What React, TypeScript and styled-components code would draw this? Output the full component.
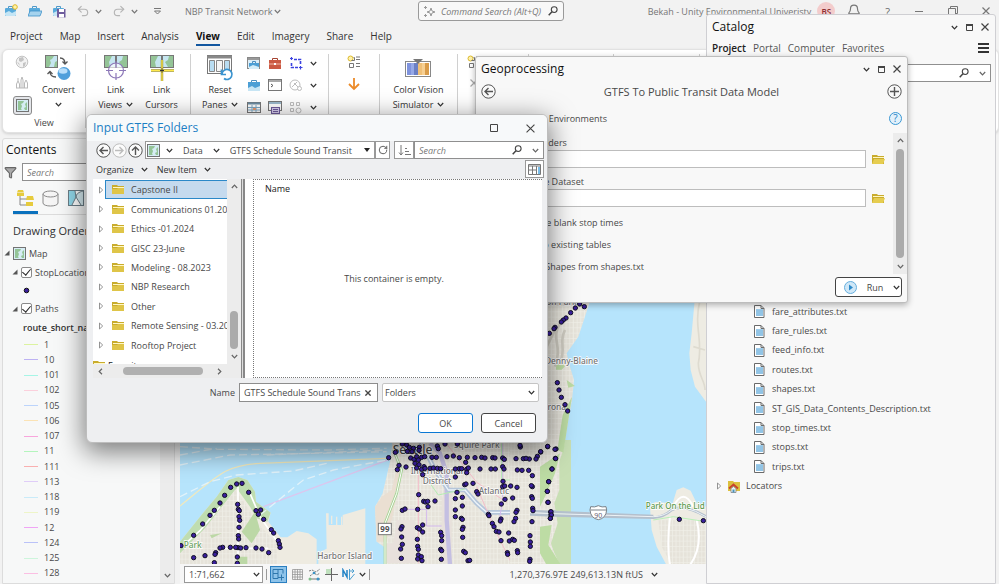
import React from 'react';
import styled, { createGlobalStyle, css } from 'styled-components';
import { Bell, Undo2, Redo2, RotateCw, Filter } from 'lucide-react';

const Global = createGlobalStyle`
  * { box-sizing: border-box; }
  html, body, #root { height: 100%; }
  body { margin: 0; background: #f2f2f2; overflow: hidden; }
  body, button, input, select { font-family: "Open Sans", "Noto Sans", sans-serif; font-size: 9px; color: #484848; }
  button { border: 0; background: none; padding: 0; }
  ul { list-style: none; margin: 0; padding: 0; }
  h2 { margin: 0; font-weight: 400; }
  svg { flex: none; display: block; }
`;

/* ---------- shell ---------- */
const Shell = styled.div`
  position: relative;
  display: flex;
  flex-direction: column;
  height: 100vh;
  overflow: hidden;
`;
const TitleBar = styled.header`
  display: grid;
  grid-template-columns: 418fr 146fr 435fr;
  height: 24px;
  padding: 1px 0 3px;
  color: #767676;
`;
const QuickAccess = styled.div`
  display: flex;
  align-items: center;
  padding-left: 4px;
  gap: 10px;
`;
const SplitButton = styled.div`
  display: flex;
  align-items: center;
  gap: 5px;
`;
const IconButton = styled.button<{ $tone?: string }>`
  display: inline-flex;
  align-items: center;
  justify-content: center;
  color: ${(p) => p.$tone || '#444'};
`;
const ProjectName = styled.button`
  display: flex;
  align-items: center;
  gap: 2px;
  margin-left: 9px;
  color: #767676;
  white-space: nowrap;
`;
const CommandSearch = styled.label`
  display: flex;
  align-items: center;
  gap: 5px;
  padding: 0 5px 0 4px;
  border: 1px solid #9a9a9a;
  border-radius: 3px;
  background: #f8f8f8;
`;
const BareInput = styled.input`
  flex: 1;
  min-width: 0;
  width: 0;
  padding: 0;
  border: 0;
  outline: 0;
  background: none;
  &::placeholder { color: #777; font-style: italic; opacity: 1; }
`;
const Account = styled.div`
  display: flex;
  align-items: center;
  justify-content: flex-end;
  gap: 6px;
  padding-right: 9px;
  white-space: nowrap;
`;
const Avatar = styled.span`
  display: grid;
  place-items: center;
  width: 18px;
  height: 18px;
  border-radius: 50%;
  background: #f3cccc;
  color: #8c2f33;
  font-size: 8px;
  font-weight: 600;
`;
const WindowButtons = styled.div`
  display: flex;
  align-items: center;
  gap: 24px;
  padding-left: 6px;
`;
const HelpButton = styled.button`
  font-size: 11px;
  color: #6a6a6a;
`;
const Tabs = styled.nav`
  display: flex;
  gap: 17px;
  height: 25px;
  padding: 3px 10px 0;
`;
const Tab = styled.button<{ $active?: boolean }>`
  align-self: flex-start;
  height: 19px;
  font-size: 10px;
  color: ${(p) => (p.$active ? '#111' : '#333')};
  font-weight: ${(p) => (p.$active ? 700 : 400)};
  border-bottom: 2px solid ${(p) => (p.$active ? '#1257a0' : 'transparent')};
`;

/* ---------- ribbon ---------- */
const Ribbon = styled.section`
  display: flex;
  height: 84px;
  flex: none;
  margin: 0 0 0 2px;
  background: #fff;
  border: 1px solid #e2e2e2;
  border-radius: 6px;
  box-shadow: 0 1px 3px rgba(0, 0, 0, 0.15);
`;
const Group = styled.div<{ $w: number }>`
  display: flex;
  flex-direction: column;
  justify-content: space-between;
  width: ${(p) => p.$w}px;
  flex: none;
  margin: 4px 0;
  border-right: 1px solid #d0d0d0;
`;
const GroupBody = styled.div<{ $pad?: number }>`
  display: flex;
  justify-content: space-evenly;
  padding: 0 ${(p) => p.$pad ?? 0}px;
`;
const GroupLabel = styled.span`
  text-align: center;
  line-height: 10px;
`;
const BigButton = styled.button`
  display: flex;
  flex-direction: column;
  align-items: center;
  gap: 2px;
  line-height: 13px;
  white-space: nowrap;
  color: #333;
`;
const Line = styled.span`
  display: flex;
  align-items: center;
  gap: 4px;
  height: 13px;
`;
const IconColumn = styled.div<{ $gap?: number }>`
  display: flex;
  flex-direction: column;
  align-items: center;
  gap: ${(p) => p.$gap ?? 6}px;
  padding-top: 1px;
`;
const IconGrid = styled.div`
  display: grid;
  grid-template-columns: repeat(4, auto);
  gap: 9px 7px;
  padding-top: 3px;
  align-items: center;
`;
const ActiveTool = styled.button`
  display: grid;
  place-items: center;
  width: 19px;
  height: 19px;
  border: 1px solid #8a8a8a;
  border-radius: 3px;
  background: #e4e6ea;
`;

/* ---------- workspace ---------- */
const Workspace = styled.main`
  display: flex;
  flex: 1;
  min-height: 0;
  gap: 5px;
  padding: 5px 293px 0 2px;
`;
const Contents = styled.section`
  display: flex;
  flex-direction: column;
  width: 173px;
  flex: none;
  border: 1px solid #dcdcdc;
  border-radius: 3px 3px 0 0;
  background: #f7f8f8;
  overflow: hidden;
`;
const PanelTitle = styled.h2`
  padding: 2px 3px 0;
  font-size: 12px;
  line-height: 18px;
  color: #111;
`;
const FilterRow = styled.div`
  display: flex;
  align-items: center;
  gap: 5px;
  padding: 4px 2px 0 1px;
`;
const SearchField = styled.label`
  display: flex;
  flex: 1;
  min-width: 0;
  align-items: center;
  gap: 10px;
  height: 18px;
  padding: 0 4px;
  border: 1px solid #8f8f8f;
  background: #fff;
`;
const ViewTabs = styled.div`
  display: flex;
  margin: 4px 0 0 10px;
  border-bottom: 1px solid #dcdcdc;
`;
const ViewTab = styled.button<{ $active?: boolean }>`
  display: flex;
  justify-content: center;
  align-items: center;
  width: 25px;
  height: 29px;
  border-bottom: 3px solid ${(p) => (p.$active ? '#0a71bd' : 'transparent')};
`;
const ContentsBody = styled.div`
  display: flex;
  flex: 1;
  min-height: 0;
`;
const Layers = styled.div`
  display: flex;
  flex-direction: column;
  flex: 1;
  min-width: 0;
  overflow: hidden;
  white-space: nowrap;
`;
const OrderHeading = styled.h2`
  padding: 7px 10px 4px;
  font-size: 11px;
  line-height: 18px;
  color: #333;
`;
const LayerRow = styled.div<{ $indent: number; $h: number }>`
  display: flex;
  align-items: center;
  gap: 2px;
  height: ${(p) => p.$h}px;
  padding-left: ${(p) => p.$indent}px;
`;
const LayerText = styled.span`
  padding-left: 1px;
`;
const FieldName = styled.strong`
  padding-left: 20px;
  line-height: 19px;
  font-weight: 600;
  color: #333;
`;
const CheckBox = styled.input`
  appearance: none;
  display: grid;
  place-items: center;
  flex: none;
  width: 11px;
  height: 11px;
  margin: 0;
  border: 1px solid #8a8a8a;
  border-radius: 2px;
  background: #fff;
  &:checked::after {
    content: '';
    width: 4px;
    height: 7px;
    margin-top: -2px;
    border: solid #222;
    border-width: 0 1px 1px 0;
    transform: rotate(40deg);
  }
`;
const Symbols = styled.ul`
  display: grid;
  grid-auto-rows: 1fr;
  flex: 1;
  min-height: 0;
  padding-bottom: 2px;
`;
const SymbolRow = styled.li<{ $color: string }>`
  display: flex;
  align-items: center;
  gap: 6px;
  min-height: 0;
  padding-left: 21px;
  line-height: 12px;
  &::before {
    content: '';
    width: 14px;
    height: 1px;
    background: ${(p) => p.$color};
  }
`;
const Gutter = styled.div<{ $w: number; $bg?: string }>`
  display: flex;
  flex-direction: column;
  justify-content: space-between;
  align-items: center;
  width: ${(p) => p.$w}px;
  flex: none;
  padding: 4px 0;
  background: ${(p) => p.$bg || '#ececec'};
`;
const ThumbTrack = styled.div`
  display: flex;
  flex-direction: column;
  flex: 1;
  width: 8px;
  padding: 4px 0;
`;
const Thumb = styled.span<{ $before: number; $size: number }>`
  display: block;
  width: 100%;
  border-radius: 4px;
  background: #ababab;
  height: ${(p) => p.$size}%;
  margin-top: ${(p) => p.$before}px;
`;
const MapView = styled.section`
  display: flex;
  flex-direction: column;
  flex: 1;
  min-width: 0;
`;
const MapCanvas = styled.div`
  display: flex;
  flex: 1;
  min-height: 0;
  background: #b6e4fc;
  overflow: hidden;
`;
const StatusBar = styled.footer`
  display: flex;
  align-items: center;
  gap: 4px;
  height: 20px;
  padding: 0 48px 0 4px;
  background: #f6f6f6;
`;
const ScaleBox = styled.div`
  display: flex;
  align-items: center;
  width: 79px;
  height: 17px;
  padding: 0 2px 0 4px;
  border: 1px solid #999;
  background: #fff;
`;
const Divider = styled.span`
  width: 1px;
  height: 11px;
  background: #999;
  margin: 0 -1px;
`;
const Pressed = styled(IconButton)`
  width: 17px;
  height: 17px;
  border: 1px solid #2b7fc0;
  background: #8dc3ea;
`;
const Coordinates = styled.output`
  display: flex;
  align-items: center;
  gap: 8px;
  margin-left: auto;
  white-space: nowrap;
`;

/* ---------- floating windows ---------- */
const floating = css`
  position: absolute;
  display: flex;
  flex-direction: column;
  border: 1px solid #bdbdbd;
  background: #f8f8f8;
`;
const WinHead = styled.div<{ $h: number }>`
  display: flex;
  align-items: center;
  gap: 7px;
  height: ${(p) => p.$h}px;
  flex: none;
  padding: 0 6px 0 5px;
`;
const WinTitle = styled.h2<{ $tone?: string }>`
  flex: 1;
  font-size: 12px;
  line-height: 18px;
  color: ${(p) => p.$tone || '#111'};
  white-space: nowrap;
`;
const CatalogWindow = styled.aside`
  ${floating}
  top: 14px;
  right: 3px;
  bottom: 0;
  width: 290px;
  border-radius: 3px 3px 0 0;
  border-color: #cfcfd3;
`;
const CatalogTabs = styled.nav`
  display: flex;
  align-items: center;
  gap: 7px;
  height: 20px;
  padding: 0 6px 2px 5px;
`;
const CatalogTab = styled.button<{ $active?: boolean }>`
  font-size: 10px;
  font-weight: ${(p) => (p.$active ? 600 : 400)};
  color: ${(p) => (p.$active ? '#222' : '#555')};
`;
const Spring = styled.span`
  flex: 1;
`;
const CatalogSearch = styled.div`
  display: flex;
  padding: 5px 4px 0;
`;
const CatalogList = styled.ul`
  display: grid;
  grid-auto-rows: 1fr;
  height: 194px;
  margin-top: 220px;
`;
const CatalogItem = styled.li<{ $root?: boolean }>`
  display: flex;
  align-items: center;
  gap: ${(p) => (p.$root ? 5 : 7)}px;
  min-height: 0;
  padding-left: ${(p) => (p.$root ? 8 : 47)}px;
  line-height: 14px;
`;
const ToolWindow = styled.section`
  ${floating}
  top: 56px;
  right: 91px;
  width: 433px;
  height: 247px;
  border-radius: 3px;
  box-shadow: 0 2px 6px rgba(0, 0, 0, 0.3);
`;
const ToolHead = styled.div`
  display: flex;
  align-items: center;
  height: 20px;
  padding: 0 5px;
`;
const ToolName = styled.span`
  flex: 1;
  text-align: center;
  font-size: 11px;
`;
const ToolTabs = styled.nav`
  display: flex;
  align-items: center;
  gap: 16px;
  height: 32px;
  padding: 2px 5px 0 8px;
`;
const ToolBody = styled.div`
  display: flex;
  flex: 1;
  min-height: 0;
`;
const Form = styled.form`
  display: flex;
  flex-direction: column;
  flex: 1;
  padding: 3px 8px 0 7px;
`;
const FieldLabel = styled.label`
  padding-left: 5px;
  line-height: 14px;
`;
const PathRow = styled.div`
  display: flex;
  align-items: center;
  gap: 6px;
  padding-bottom: 7px;
  &:last-of-type { padding-bottom: 4px; }
`;
const PathInput = styled.input`
  flex: 1;
  min-width: 0;
  height: 18px;
  border: 1px solid #bdbdbd;
  background: #fff;
`;
const Option = styled.label`
  display: flex;
  align-items: center;
  gap: 5px;
  height: 22px;
  flex: none;
  padding-left: 6px;
`;
const ToolFoot = styled.div`
  display: flex;
  justify-content: flex-end;
  padding: 3px 5px 5px;
`;
const RunButton = styled.button`
  display: flex;
  align-items: center;
  justify-content: space-between;
  width: 67px;
  height: 20px;
  padding: 0 1px 0 8px;
  border: 1px solid #444;
  border-radius: 3px;
  background: #fff;
`;
const Dialog = styled.section`
  ${floating}
  top: 114px;
  left: 86px;
  width: 462px;
  height: 329px;
  border-radius: 6px;
  background: #eeeff1;
  overflow: hidden;
  box-shadow: 0 7px 26px 2px rgba(0, 0, 0, 0.5);
`;
const DialogHead = styled(WinHead)`
  gap: 27px;
  padding: 0 12px 0 6px;
  background: #f7f9fa;
`;
const Toolbar = styled.div`
  display: flex;
  align-items: center;
  gap: 1px;
  height: 18px;
  padding: 0 3px 0 9px;
`;
const Crumbs = styled.div`
  display: flex;
  align-items: center;
  gap: 10px;
  width: 230px;
  height: 18px;
  margin-left: 1px;
  padding: 0 3px 0 1px;
  border: 1px solid #999;
  background: #fff;
  white-space: nowrap;
`;
const CrumbIcon = styled.span`
  margin-right: -4px;
`;
const CrumbMenu = styled(IconButton)`
  margin-left: auto;
  padding-right: 1px;
`;
const Boxed = styled(IconButton)<{ $w: number }>`
  width: ${(p) => p.$w}px;
  height: 18px;
  margin-left: -1px;
  border: 1px solid #999;
  background: #fff;
`;
const SearchGroup = styled.div`
  display: flex;
  flex: 1;
  min-width: 0;
  margin-left: 4px;
`;
const Commands = styled.div`
  display: flex;
  align-items: center;
  gap: 9px;
  height: 20px;
  padding: 0 3px 0 9px;
`;
const MenuButton = styled.button`
  display: flex;
  align-items: center;
  gap: 7px;
  color: #333;
`;
const Panes = styled.div`
  display: flex;
  height: 199px;
  margin: 0 5px 0 6px;
  background: #fff;
`;
const TreePane = styled.div`
  display: grid;
  grid-template-columns: minmax(0, 1fr) 14px;
  grid-template-rows: minmax(0, 1fr) 14px;
  width: 148px;
  background: #ececec;
`;
const TreeScroll = styled.div`
  background: #fff;
  overflow: hidden;
  padding-top: 1px;
`;
const Tree = styled.ul`
  display: grid;
  grid-auto-rows: 1fr;
  height: 175px;
`;
const TreeItem = styled.li`
  display: flex;
  align-items: stretch;
  min-height: 0;
`;
const Expander = styled(IconButton)`
  width: 12px;
  padding-left: 3px;
  flex: none;
`;
const FolderButton = styled.button<{ $selected?: boolean }>`
  display: flex;
  align-items: center;
  gap: 6px;
  flex: 1;
  padding-left: 6px;
  white-space: nowrap;
  border: 1px solid ${(p) => (p.$selected ? '#2b88c8' : 'transparent')};
  border-right: 0;
  background: ${(p) => (p.$selected ? '#c5daee' : 'none')};
`;
const Favorites = styled.div`
  display: flex;
  align-items: center;
  gap: 2px;
  height: 20px;
  color: #222;
`;
const HScroll = styled.div`
  display: flex;
  align-items: center;
  justify-content: space-between;
  padding: 0 4px;
`;
const HThumb = styled.span`
  width: 80px;
  height: 8px;
  margin-left: 5px;
  border-radius: 4px;
  background: #b0b0b0;
`;
const Splitter = styled.div`
  width: 4px;
  border: 1px solid #888;
  border-width: 0 2px 0 1px;
  background: #ddd;
`;
const ListPane = styled.div`
  display: flex;
  flex-direction: column;
  flex: 1;
  margin-left: 8px;
  border: 1px dotted #777;
  border-right: 0;
`;
const ColumnHead = styled.div`
  padding: 2px 11px;
  line-height: 14px;
  color: #222;
`;
const Empty = styled.p`
  flex: 1;
  display: grid;
  place-items: center;
  margin: 0 8px 18px 0;
`;
const NameRow = styled.div`
  display: flex;
  align-items: center;
  justify-content: flex-end;
  gap: 4px;
  padding: 5px 8px 0 0;
`;
const NameField = styled.div`
  display: flex;
  align-items: center;
  width: 139px;
  height: 19px;
  padding: 0 6px 0 4px;
  border: 1px solid #8d8d8d;
  background: #fff;
`;
const TypePicker = styled.div`
  display: grid;
  align-items: center;
  width: 157px;
  height: 19px;
  border: 1px solid #c4c4c4;
  border-radius: 2px;
  background: #fff;
  & > * { grid-area: 1 / 1; }
  & > svg { justify-self: end; margin-right: 3px; pointer-events: none; }
`;
const TypeSelect = styled.select`
  appearance: none;
  width: 100%;
  height: 100%;
  padding: 0 2px;
  border: 0;
  background: none;
`;
const Actions = styled.div`
  display: flex;
  justify-content: flex-end;
  gap: 8px;
  padding: 11px 11px 0 0;
`;
const ActionButton = styled.button<{ $primary?: boolean }>`
  width: 55px;
  height: 20px;
  border: 1px solid ${(p) => (p.$primary ? '#0a78d4' : '#444')};
  border-radius: 3px;
  background: #fff;
`;

/* ---------- icons ---------- */
const turns = { down: 0, left: 90, up: 180, right: 270 };
const Chevron = ({ c = '#333', dir = 'down' }: { c?: string; dir?: keyof typeof turns }) => (
  <svg width="7" height="7" viewBox="0 0 7 7">
    <path d="M.8 2l2.700 2.800L6.200 2" fill="none" stroke={c} strokeWidth="1.200" transform={`rotate(${turns[dir]} 3.500 3.500)`} />
  </svg>
);
const Cross = ({ s = 8, w = 1.2, c = '#444' }: { s?: number; w?: number; c?: string }) => (
  <svg width={s} height={s} viewBox="0 0 8 8">
    <path d="M.5.5l7 7M7.500.5l-7 7" stroke={c} strokeWidth={w} />
  </svg>
);
const Magnify = () => (
  <svg width="10" height="10" viewBox="0 0 10 10" fill="none" stroke="#444">
    <circle cx="6.200" cy="3.600" r="2.900" strokeWidth="1.100" />
    <path d="M4 5.800L.7 9.200" strokeWidth="1.500" />
  </svg>
);
const MapGlyph = ({ s = 13 }: { s?: number }) => (
  <svg width={s} height={s} viewBox="0 0 13 13">
    <rect x=".5" y=".5" width="12" height="12" fill="#d6edf4" stroke="#737373" />
    <path d="M2 2h6L7 4 5 5l1 2-1 3 1 1H2zM9 5l2-2v8H9L8 9l2-1z" fill="#94c497" />
  </svg>
);
const Briefcase = ({ kind }: { kind: 'new' | 'open' | 'save' }) => (
  <svg width="14" height="14" viewBox="0 0 14 14">
    <path d="M4.500 4V2.500h4V4" fill="none" stroke="#4e98c8" />
    <rect x="1" y="4" width="11" height="8" rx="1" fill="#58aadb" />
    <path d="M1 9l4-2 3 2 4-2v4l-1 1H2l-1-1z" fill="#c4e5f5" />
    {kind === 'new' && <circle cx="11" cy="3" r="2.300" fill="#fff2a5" stroke="#dfb629" />}
    {kind === 'open' && <path d="M2 7h12l-2 5H0z" fill="#a5d3ee" stroke="#3f92c8" strokeWidth=".8" />}
    {kind === 'save' && (
      <g>
        <rect x="5" y="5" width="8.500" height="8.500" fill="#6e5c9d" />
        <path d="M7 5h5v3H7zM7 10h5v3.500H7z" fill="#fff" />
      </g>
    )}
  </svg>
);
const Globe = () => (
  <svg width="14" height="14" viewBox="0 0 14 14">
    <circle cx="7" cy="7" r="5.800" fill="#f2f2f2" stroke="#c3c3c3" />
    <path d="M4 3l4-1 1 3-3 2-2-1zM8 8l3-1-1 4-2 1zM2 7l2 1 1 3z" fill="#c3c3c3" />
  </svg>
);
const Scene = () => (
  <svg width="14" height="15" viewBox="0 0 14 15">
    <path d="M1.500 13V9l1.500-3 1.500 3v4M3 6V3M6 13V5l1-3 1 3v8M9.500 13V8l1.500-3 1.500 3v5M1 13h12" fill="none" stroke="#b9b9b9" />
  </svg>
);
const ConvertIcon = () => (
  <svg width="28" height="27" viewBox="0 0 28 27">
    <rect x="1.500" y="1.500" width="12" height="12" fill="#c6e6f0" stroke="#777" />
    <path d="M2 2h8L8 5 6 6l1 3-2 4H2zM11 8l2-1v6h-3z" fill="#94c497" />
    <path d="M16 4c4 0 5 2 5 6M18.500 7.500L21 10l2.500-2.500M12 23c-4 0-6-2-6-5.500M3.500 20L6 17.500 8.500 20" fill="none" stroke="#555" strokeWidth="1.300" />
    <circle cx="20" cy="19.500" r="6.500" fill="#4f9fdb" />
    <ellipse cx="19" cy="17" rx="4.500" ry="2.800" fill="#b9defa" />
  </svg>
);
const TwinMaps = () => (
  <g>
    <rect x="1.500" y="1.500" width="11" height="12" fill="#c6e6f0" stroke="#777" />
    <path d="M2 2h7L6 8l1 5H2z" fill="#94c497" />
    <rect x="13.500" y="1.500" width="11" height="12" fill="#c6e6f0" stroke="#777" />
    <path d="M20 2h4v11h-5l-3-5 3-2z" fill="#94c497" />
  </g>
);
const LinkViews = () => (
  <svg width="26" height="27" viewBox="0 0 26 27">
    <TwinMaps />
    <circle cx="13" cy="16.500" r="7.500" fill="#fff" fillOpacity=".65" stroke="#8d78b8" strokeWidth="1.200" />
    <path d="M13 7v7M13 19v7M3 16.500h7M16 16.500h7" stroke="#8d78b8" strokeWidth="1.200" />
  </svg>
);
const LinkCursors = () => (
  <svg width="26" height="27" viewBox="0 0 26 27">
    <TwinMaps />
    <path d="M13 6v21M2 16.500h23" stroke="#8a8432" strokeWidth="2.400" />
    <path d="M13 6v21M2 16.500h23" stroke="#ffe94d" strokeWidth="1.300" />
    <path d="M11 16.500h4M13 14.500v4" stroke="#333" />
  </svg>
);
const ResetPanes = () => (
  <svg width="28" height="27" viewBox="0 0 28 27">
    <rect x="1.500" y="1.500" width="24" height="18" fill="#fff" stroke="#777" />
    <path d="M1 3h25" stroke="#888" strokeWidth="3" />
    <path d="M3.500 6.500h5v11h-5zM18.500 6.500h5v10h-5z" fill="#b9ddf2" stroke="#888" />
    <path d="M10.500 6.500h6v11h-6z" fill="#f5f5f5" stroke="#888" />
    <circle cx="20.500" cy="21" r="5.800" fill="#fff" />
    <path d="M16 20a5 5 0 1 1 2 4.500M15.500 15.500v5h4.500" fill="none" stroke="#3a94d0" strokeWidth="1.700" />
  </svg>
);
const PaneIcon = ({ kind }: { kind: 'catalog' | 'case' | 'table' | 'toolbox' | 'python' | 'task' | 'model' | 'fly' | 'grid' }) => (
  <svg width="14" height="13" viewBox="0 0 14 13">
    {kind === 'catalog' && (<g><rect x=".5" y=".5" width="12" height="11" fill="#dceef8" stroke="#888" /><path d="M1 2h11" stroke="#999" strokeWidth="2" /><path d="M5.500 6V4.500h3V6" fill="none" stroke="#4c8fc0" /><rect x="2" y="6" width="10" height="6" fill="#4c9fd5" /><path d="M2 10l4-2 6 2v2H2z" fill="#d4edf8" /></g>)}
    {kind === 'case' && (<g><path d="M4.500 3V1.500h5V3" fill="none" stroke="#4c8fc0" /><rect x="1" y="3" width="12" height="9" fill="#4c9fd5" /><path d="M1 9l4-2 3 2 5-2v5H1z" fill="#c8e6f5" /></g>)}
    {kind === 'table' && (<g><rect x=".5" y="1.500" width="13" height="10" fill="#fff" stroke="#777" /><path d="M1 2.500h12" stroke="#6a8ca3" strokeWidth="2" /><path d="M1 6.500h12M1 9h12M5 4v7M9 4v7" stroke="#7ea9c5" /><path d="M6 7h3v2H6z" fill="#e89a70" /></g>)}
    {kind === 'toolbox' && (<g><path d="M4.500 3V1.500h5V3" fill="none" stroke="#a64331" /><rect x="1" y="3" width="12" height="9" fill="#cb5a43" /><path d="M1 7h12" stroke="#f1b7a6" /><path d="M6 6h2v2H6z" fill="#fff" /></g>)}
    {kind === 'python' && (<g><rect x=".5" y=".5" width="13" height="11" fill="#fff" stroke="#777" /><path d="M1 2h12" stroke="#aaa" strokeWidth="2" /><path d="M3 5l2 1.500L3 8" fill="none" stroke="#555" /></g>)}
    {kind === 'task' && (<g><rect x=".5" y=".5" width="13" height="9" fill="#fff" stroke="#777" /><path d="M1 2h12" stroke="#9bb9cc" strokeWidth="2" /><rect x="3.500" y="6.500" width="8" height="6" fill="#d9cff0" stroke="#6e5c9d" /><path d="M5 8.500h5M5 10.500h5" stroke="#6e5c9d" /></g>)}
    {kind === 'model' && (<g fill="none" stroke="#3b42e0" strokeWidth="1.600"><path d="M5 2.500h6.500V8M9 10.500H2.500V5" strokeDasharray="3 1" /><path d="M1 1.500h3M2.500 0v3M10 10.500h3.500M11.500 9v3.500" strokeWidth="1.200" /></g>)}
    {kind === 'fly' && (<g fill="none" stroke="#bdbdbd"><circle cx="6" cy="6" r="5" /><path d="M3 8l5-5M5 4l4 4" /><circle cx="10.500" cy="9.500" r="2" fill="#fff" /></g>)}
    {kind === 'grid' && (<g fill="none" stroke="#bdbdbd"><path d="M1.500 1.500h3v3h-3zM7.500 1.500h3v3h-3zM1.500 7.500h3v3h-3z" /><circle cx="9.500" cy="9.500" r="2.500" /></g>)}
  </svg>
);
const AddList = () => (
  <svg width="14" height="14" viewBox="0 0 14 14">
    <circle cx="3.500" cy="3.500" r="2.500" fill="#fff3ad" stroke="#dcb92f" />
    <path d="M2.500 8.500h4v4h-4zM6.500 2.500h1v3h-3M9 2h4M9 4.500h4M9 8.500h4M9 11.500h4" fill="none" stroke="#777" />
  </svg>
);
const DownArrow = () => (
  <svg width="14" height="14" viewBox="0 0 14 14">
    <path d="M7 1v11M2 7l5 5 5-5" fill="none" stroke="#ec8b29" strokeWidth="1.800" />
  </svg>
);
const ColorVision = () => (
  <svg width="26" height="27" viewBox="0 -5 26 27">
    <rect x=".5" y="2.500" width="25" height="15" fill="#fff" stroke="#888" />
    <path d="M2 4h4v12H2z" fill="#7f93dd" /><path d="M6 4h3v12H6z" fill="#96a9e8" /><path d="M9 4h4v12H9z" fill="#6c80c4" />
    <path d="M13 4h4v12h-4z" fill="#f0c078" /><path d="M17 4h3v12h-3z" fill="#f7d093" /><path d="M20 4h4v12h-4z" fill="#d99c4a" />
    <path d="M8 0h10l-5 5z" fill="#777" />
  </svg>
);
const Sparkle = () => (
  <svg width="13" height="13" viewBox="0 0 13 13" fill="none" stroke="#999">
    <path d="M8 3l1 3 3 1-3 1-1 3-1-3-3-1 3-1zM2.500 1v3M1 2.500h3M2.500 9v3M1 10.500h3" />
  </svg>
);
const FolderIcon = ({ open }: { open?: boolean }) => (
  <svg width="13" height="11" viewBox="0 0 13 11">
    <path d="M0 1h5l1 1h6v8H0z" fill="#c9ac2d" />
    <path d="M1 3h11v1H1z" fill="#fff7c4" />
    <path d={open ? 'M2 5h11l-2 5H0z' : 'M0 5h5l1-1h6v6H0z'} fill={open ? '#e6cd50' : '#dfc548'} />
  </svg>
);
const FileIcon = () => (
  <svg width="11" height="13" viewBox="0 0 11 13">
    <path d="M.5.5h6.500l3 3v9H.5z" fill="#fff" stroke="#6a6a6a" />
    <path d="M7 .5v3h3" fill="none" stroke="#6a6a6a" />
    <path d="M2 4h7v7H2z" fill="#9fcdec" />
    <path d="M2 6h7M2 8h7M2 10h7" stroke="#7db4da" strokeWidth=".7" />
  </svg>
);
const LocatorIcon = () => (
  <svg width="13" height="13" viewBox="0 0 13 13">
    <path d="M0 1h5l1 1h6v9H0z" fill="#dcc03e" />
    <path d="M1 8.500l4.500-4 4.500 4" fill="none" stroke="#c9432e" strokeWidth="1.800" />
    <path d="M3 8.500l2.500-2 2.500 2v4H3z" fill="#e9f3f8" stroke="#777" strokeWidth=".7" />
    <path d="M4.500 9.500h2v3h-2z" fill="#4b93bd" />
  </svg>
);
const Triangle = ({ open }: { open?: boolean }) => (
  <svg width="8" height="8" viewBox="0 0 8 8">
    {open ? <path d="M6.500 1.500v5H1.500z" fill="#555" /> : <path d="M2.500 1l3.200 3-3.200 3z" fill="#fff" stroke="#888" strokeWidth=".9" />}
  </svg>
);
const RoundArrow = ({ dir, muted }: { dir: number; muted?: boolean }) => (
  <svg width="15" height="15" viewBox="0 0 15 15" fill="none" stroke={muted ? '#bcbcbc' : '#555'}>
    <circle cx="7.500" cy="7.500" r="6.700" fill="#fbfbfb" />
    <path d="M12 7.500H4M7.500 4L4 7.500 7.500 11" strokeWidth="1.400" transform={`rotate(${dir} 7.500 7.500)`} />
  </svg>
);
const PlusCircle = () => (
  <svg width="15" height="15" viewBox="0 0 15 15" fill="none" stroke="#555">
    <circle cx="7.500" cy="7.500" r="6.700" />
    <path d="M7.500 3v9M3 7.500h9" strokeWidth="1.400" />
  </svg>
);
const HelpRing = styled.button`
  display: grid;
  place-items: center;
  width: 13px;
  height: 13px;
  margin-left: auto;
  border: 1px solid #3a97d3;
  border-radius: 50%;
  background: #e2f1fb;
  color: #1e82c4;
  font-size: 10px;
  line-height: 11px;
`;
const Maximize = ({ bar = true }: { bar?: boolean }) => (
  <svg width="9" height="9" viewBox="0 0 9 9">
    <path d={bar ? 'M1.500 1.500h6v6h-6z' : 'M.5.5h7v7h-7z'} fill="none" stroke="#444" />
    {bar && <path d="M1 2h7" stroke="#444" strokeWidth="2" />}
  </svg>
);
const Restore = () => (
  <svg width="10" height="10" viewBox="0 0 10 10" fill="none" stroke="#777">
    <path d="M.5 2.500h7v7h-7zM2.500 2.500v-2h7v7h-2" />
  </svg>
);
const Menu = () => (
  <svg width="11" height="10" viewBox="0 0 11 10">
    <path d="M0 1h11M0 5h11M0 9h11" stroke="#333" strokeWidth="2" />
  </svg>
);
const PlayIcon = () => (
  <svg width="13" height="13" viewBox="0 0 13 13">
    <circle cx="6.500" cy="6.500" r="6" fill="#cfe7f7" stroke="#66aedd" />
    <path d="M5 3.500l4 3-4 3z" fill="#2c8aca" />
  </svg>
);
const SortIcon = () => (
  <svg width="13" height="12" viewBox="0 0 13 12" fill="none" stroke="#777">
    <path d="M3 1v10M1 8.500L3 11l2-2.500M7 4.500h2M7 7.500h4M7 10.500h6" />
  </svg>
);
const DetailsIcon = () => (
  <svg width="13" height="11" viewBox="0 0 13 11">
    <path d="M.5.5h12v10H.5z" fill="#fff" stroke="#777" />
    <path d="M0 2h13M1 6h7M4.500 2v8M8.500 2v8" stroke="#777" />
    <path d="M10 3h2v7h-2z" fill="#79bce8" />
  </svg>
);
const ListByOrder = () => (
  <svg width="17" height="17" viewBox="0 0 17 17">
    <path d="M3 6v9h7M3 9h7" fill="none" stroke="#888" />
    <path d="M1 0h5l1 2.500H0L1 0zM0 3h7v3H0zM10 6h6l1 4H9zM9 12h7v4H9z" fill="#e6cb3d" />
  </svg>
);
const Database = () => (
  <svg width="17" height="17" viewBox="0 0 17 17" fill="#f5f5f5" stroke="#8a8a8a">
    <path d="M1 4v9c0 4 15 4 15 0V4" />
    <ellipse cx="8.500" cy="4" rx="7.500" ry="3" />
  </svg>
);
const SelectionIcon = () => (
  <svg width="16" height="16" viewBox="0 0 16 16">
    <rect x=".5" y=".5" width="15" height="15" fill="#fff" stroke="#6a7d86" />
    <path d="M1 1h6l1 6-4 8H1z" fill="#8fd6e8" /><path d="M15 1c-5 2-7 4-7 6l5 8h2z" fill="#d8eef4" /><path d="M7 1l1 6-4 8M8 7c0-3 3-5 7-6M8 7l5 8" fill="none" stroke="#6a7d86" />
  </svg>
);
const Snap = ({ kind }: { kind: 'add' | 'grid' | 'edit' | 'cross' | 'north' }) => (
  <svg width="13" height="13" viewBox="0 0 13 13" fill="none" stroke="#888">
    {kind === 'add' && <path d="M1 1.500h5v4H1zM6 1.500h5v4M1 5.500v5h5M6 5.500v5M6 9.500h6M9.500 6.500v6" stroke="#2e77ad" />}
    {kind === 'grid' && <path d="M1.500 1.500h10v10h-10zM4 1v11M6.500 1v11M9 1v11M1 4h11M1 6.500h11M1 9h11" stroke="#999" strokeWidth=".8" />}
    {kind === 'edit' && (<g><path d="M1 3l3-1 4 2 4-3M2 8l4-3 3 2 3-2" stroke="#777" strokeDasharray="2 1" /><path d="M1 11h11" stroke="#777" /><circle cx="2" cy="11" r="1.500" fill="#7fc08a" stroke="none" /><circle cx="10" cy="11" r="1.500" fill="#3b93c5" stroke="none" /><circle cx="6" cy="5" r="1.300" fill="#3b93c5" stroke="none" /></g>)}
    {kind === 'cross' && (<g><rect x="1" y="1" width="5" height="5" fill="#bfe0bd" stroke="none" /><path d="M6.500 0v13M0 6.500h13" stroke="#666" /></g>)}
    {kind === 'north' && (<g><path d="M1 9V2l4 7V2" stroke="#2384c6" strokeWidth="1.500" /><path d="M7.500 1v11l5-6M8 3h4M10 1l2 2-2 2" stroke="#4c9fd0" /></g>)}
  </svg>
);

/* ---------- map ---------- */
/* Drawing units are thirds of a pixel; each stop list is local to its map tile. */
const cityStops =
  '92,442 110,432 126,430 146,457 74,466 60,489 43,511 30,526 8,552 -19,586 -57,617 -19,653 15,647 113,493 115,508 118,512 117,530 119,541 117,562 115,587 116,597 114,623 107,622 122,624 91,622 68,622 60,624 47,638 45,643 43,668 138,623 168,624 186,627 206,638 112,651 112,670 168,512 182,510 175,523 191,538 214,569 221,579 235,602 238,612 240,622 ' +
  '566,353 586,337 620,315 607,312 628,322 640,325 636,335 622,334 658,322 657,331 712,318 715,326 735,312 772,312 961,321 960,316 1043,320 1068,327 1022,336 1012,349 1008,357 632,354 642,358 650,350 655,360 665,352 674,350 696,352 709,352 741,350 760,348 778,353 802,352 825,353 845,352 855,354 878,353 885,354 908,354 913,358 948,356 970,356 988,357 978,355 1066,355 ' +
  '597,376 592,389 618,381 645,370 650,384 657,374 665,388 672,380 675,385 690,385 700,384 712,385 722,386 766,387 778,386 785,386 800,388 805,384 840,387 873,387 886,387 908,380 912,387 952,390 966,391 986,391 1056,387 797,367 668,404 766,411 800,398 909,424 794,434 798,432 819,430 830,455 834,462 908,440 914,438 932,438 951,442 771,457 787,472 766,476 787,498 766,510 766,530 784,535 787,538 789,562 787,568 788,592 ' +
  '656,464 671,484 676,486 683,484 705,483 684,500 607,511 615,507 653,508 606,560 603,567 605,591 607,613 602,627 604,655 668,555 652,563 658,567 668,576 652,598 653,619 655,628 655,645 664,650 653,657 666,662 722,577 725,587 725,602 722,628 725,632 724,658 791,634 796,638 804,662 809,661 865,523 867,527 877,550 882,560 889,574 897,576 903,537 901,543 915,478 904,492 938,474 951,511 948,517 947,535 942,545 926,579 903,602 928,603 938,598 943,601 922,638 923,643 952,632 953,638 ' +
  '997,407 997,440 994,437 995,470 997,475 998,505 999,512 996,545 990,587 991,606 991,619 990,658 989,664 1046,425 1042,454 1044,487 1052,516 1053,524 1051,535';
const lakeStops =
  '119,42 133,50 106,54 92,68 78,84 70,90 64,96 45,112 42,116 28,130 52,278 57,300 64,322 75,344 83,363 23,469 45,478 2,485 47,506 36,537 26,575 22,604 24,637 33,665 34,675 31,685 418,688 490,692';
const Stops = ({ at }: { at: string }) => (
  <g fill="#3a1f9e" stroke="#111024" strokeWidth="3">
    {at.split(' ').map((p, i) => {
      const [x, y] = p.split(',');
      return <circle key={i} cx={x} cy={y} r="6.500" />;
    })}
  </g>
);
const CityMap = () => (
  <svg width="100%" height="100%" viewBox="540 414 1578 1278" preserveAspectRatio="xMinYMax slice" role="img" aria-label="Transit stop map">
    <defs>
      <pattern id="blocks" width="22" height="16" patternUnits="userSpaceOnUse">
        <rect width="22" height="16" fill="#e6e3da" />
        <path d="M0 1h22M1 0v16M12 0v16" stroke="#f2f0e9" strokeWidth="2" />
      </pattern>
    </defs>
    <g transform="translate(600 1020)">
      <path d="M-60 605L0 530 50 470 85 420 115 411 142 420 165 455 168 485 212 518 205 545 242 592 262 592 290 573 325 580 350 598V675H-60z" fill="#eeebe1" />
      <path d="M-60 605L0 530 50 470 85 420 115 411 142 420 165 455 168 485 212 518 202 545 170 535 150 500 110 445 70 495 20 560-60 650z" fill="#bfddb0" />
      <path d="M15 565L105 450 135 490 170 545 228 610 235 675H-60V640z" fill="url(#blocks)" />
      <path d="M-60 625L0 572 60 500M55 625h150M114 440v230M150 460l30 70 55 80" stroke="#fff" strokeWidth="5" fill="none" />
      <path d="M125 575l40-60 15 55-25 40zM30 585l35-5-30 15zM112 650h30v24h-30z" fill="#bcd8a6" />
      <path d="M378 520h8v35h42v-30l68-20v170H355v-37l25-12z" fill="#eeebe1" />
      <path d="M395 552v-25M410 555v-25M425 555v-25" stroke="#eeebe1" strokeWidth="4" />
      <path d="M578 300L570 365 548 460 525 500 530 605 552 620V675H1110V300z" fill="url(#blocks)" />
      <path d="M590 385L575 450 548 468 525 500 530 605 560 605 580 520 600 400z" fill="#eadfd2" />
      <path d="M590 540h55v130h-90v-60h25zM735 440h20v230h-30V480z" fill="#e8e1dc" />
      <path d="M580 330l25 60-15 70-35 90v125" fill="none" stroke="#a5d493" strokeWidth="8" />
      <path d="M580 330l25 60-15 70-35 90v125" fill="none" stroke="#fff" strokeWidth="3" />
      <path d="M690 310l30 30 20 60v140l10 135" fill="none" stroke="#c4bfe2" strokeWidth="13" />
      <path d="M660 300l45 90 40 60 50 0 35 40 30 27h240" fill="none" stroke="#b5c6da" strokeWidth="14" />
      <path d="M660 300l45 90 40 60 50 0 35 40 30 27h240" fill="none" stroke="#edf4fa" strokeWidth="4" />
      <path d="M655 400v270M740 312l90 115 90 60M830 440l60 140 45 90" fill="none" stroke="#f4bdcb" strokeWidth="3" />
      <path d="M908 310v170l-10 60M997 400v270M600 508h80v50h45" fill="none" stroke="#d3b8ee" strokeWidth="3" />
      <path d="M690 430l25 35 80-18M905 310v110h50v170" fill="none" stroke="#b5edb3" strokeWidth="3" />
      <path d="M-60 498C60 400 80 375 180 370L560 355" fill="none" stroke="#f1e9bd" strokeWidth="4" />
      <path d="M190 500L568 358" fill="none" stroke="#dcc6ee" strokeWidth="4" />
      <path d="M-60 320l120 8 320 2 180-5M-60 375l150-30 240-5 230-5M-60 470l90-45 80-20 170-12 110-25M180 525l130-105 90-30 160-30M-60 345l110-20M200 345l360-15" fill="none" stroke="#e9f4f9" strokeWidth="4" strokeDasharray="24 12" opacity=".85" />
      <path d="M1078 300v150l-15 40 10 60-20 60 20 65h40V300z" fill="#c8dfb4" />
      <g fontFamily="Noto Sans" fontSize="25" fontWeight="500" fill="#747474" stroke="#fff" strokeWidth="4" paintOrder="stroke">
        <text x="352" y="657">Harbor Island</text>
        <text x="762" y="324">Squire Park</text>
        <text x="632" y="403">International</text>
        <text x="668" y="431">District</text>
        <text x="836" y="461">Atlantic</text>
        <text x="975" y="376">Leschi</text>
        <text x="-49" y="624" fill="#6aa05c">Park</text>
        <text x="578" y="342" fontSize="36" fill="#444">Seattle</text>
      </g>
      <rect x="535" y="550" width="39" height="34" fill="#fff" stroke="#777" strokeWidth="3" />
      <text x="541" y="576" fontFamily="Noto Sans" fontSize="24" fontWeight="700" fill="#555">99</text>
    </g>
    <g transform="translate(1620 870)">
      <path d="M-90-60H160L148 40 130 95 115 140 80 190 90 230 102 270 96 330 85 390 70 480 52 530 40 620 36 700 30 760 62 830H-90z" fill="url(#blocks)" />
      <path d="M96 320L85 390 70 488 52 480 68 375zM0 530l60-40-15 60-25 60L0 650zM0 710l35-5-10 60 38 60H20L0 790zM48 225l15-8 12 12-10 10H48zM80 270l25 18-20 5z" fill="#bddca4" />
      <path d="M60 100C30 150 70 160 45 230M75 120C55 160 80 165 60 225M20 170l30-60" fill="none" stroke="#cfccc2" strokeWidth="8" />
      <path d="M465 20L455 130 448 190 452 240 465 290 498 335V20z" fill="#eeece3" />
      <path d="M480 30c-20 80 10 120-5 190 0 40 20 50 20 80M460 170l35 10" stroke="#dedbd0" strokeWidth="5" fill="none" />
      <path d="M330 652L345 636 398 640 410 600 430 592 452 602 470 640 498 650V830H382L350 770 335 720z" fill="#eeece3" />
      <path d="M355 690h143v135H395L365 770z" fill="url(#blocks)" />
      <path d="M390 680q-10 90 0 145M470 690q20 80-20 135M400 650q30-60 60 0" fill="none" stroke="#fff" strokeWidth="6" />
      <path d="M-30 673L40 676 340 683Q370 682 395 660 430 640 498 680M-30 663L40 666 340 678" fill="none" stroke="#b4c0cd" strokeWidth="8" />
      <path d="M-30 668L40 671 340 680Q370 680 395 660 430 640 498 680" fill="none" stroke="#edf2f6" strokeWidth="3" />
      <path d="M340 690L400 680 498 695" fill="none" stroke="#b9efb7" strokeWidth="3" />
      <g fontFamily="Noto Sans" fontSize="25" fontWeight="500" fill="#747474" stroke="#fff" strokeWidth="4" paintOrder="stroke">
        <text x="174" y="221" textAnchor="end">Denny-Blaine</text>
        <text x="78" y="361" textAnchor="end">Madrona</text>
        <text x="110" y="46" textAnchor="end">Madison Park</text>
        <text x="494" y="656" textAnchor="end" fontSize="24" fill="#5c994e">Park On the Lid</text>
      </g>
      <path d="M152 650q12 3 23-3 11 6 23 3l2 10q-2 25-25 29-23-4-25-29z" fill="#fff" stroke="#7b8288" strokeWidth="3" />
      <path d="M152 660h46" stroke="#7b8288" strokeWidth="3" />
      <text x="163" y="683" fontFamily="Noto Sans" fontSize="21" fill="#667">90</text>
    </g>
    <g transform="translate(600 1020)"><Stops at={cityStops} /></g>
    <g transform="translate(1620 870)"><Stops at={lakeStops} /></g>
  </svg>
);

/* ---------- data ---------- */
const tabs = ['Project', 'Map', 'Insert', 'Analysis', 'View', 'Edit', 'Imagery', 'Share', 'Help'];
const routes: [string, string][] = [
  ['1', '#dcf3a0'], ['10', '#bdb2f3'], ['101', '#a6f5e6'], ['102', '#fbd0dc'], ['105', '#bcd4fb'], ['106', '#fbe3b5'],
  ['107', '#f8a6dc'], ['11', '#b4f5bd'], ['111', '#f9b0b0'], ['113', '#dfcdf8'], ['118', '#c9ebf9'], ['119', '#eef5c8'],
  ['12', '#f0a5f5'], ['124', '#bac2f8'], ['125', '#cdf5dc'], ['128', '#fbbfe3'],
];
const folders = ['Capstone II', 'Communications 01.2024', 'Ethics -01.2024', 'GISC 23-June', 'Modeling - 08.2023', 'NBP Research', 'Other', 'Remote Sensing - 03.2024', 'Rooftop Project'];
const files = ['fare_attributes.txt', 'fare_rules.txt', 'feed_info.txt', 'routes.txt', 'shapes.txt', 'ST_GIS_Data_Contents_Description.txt', 'stop_times.txt', 'stops.txt', 'trips.txt'];

const TopBar = () => (
  <TitleBar>
    <QuickAccess>
      <IconButton aria-label="New project"><Briefcase kind="new" /></IconButton>
      <IconButton aria-label="Open project"><Briefcase kind="open" /></IconButton>
      <IconButton aria-label="Save project"><Briefcase kind="save" /></IconButton>
      <SplitButton>
        <IconButton aria-label="Undo" $tone="#b5b5b5"><Undo2 size={14} /></IconButton>
        <Chevron c="#777" />
      </SplitButton>
      <SplitButton>
        <IconButton aria-label="Redo" $tone="#b5b5b5"><Redo2 size={14} /></IconButton>
        <Chevron c="#777" />
      </SplitButton>
      <IconButton aria-label="Customize toolbar">
        <svg width="18" height="8" viewBox="0 0 18 8"><path d="M6 1.500h7M6.500 4l3 3 3-3z" fill="none" stroke="#777" /></svg>
      </IconButton>
      <ProjectName>NBP Transit Network <Chevron c="#777" /></ProjectName>
    </QuickAccess>
    <CommandSearch>
      <Sparkle />
      <BareInput placeholder="Command Search (Alt+Q)" aria-label="Command Search" />
      <Magnify />
    </CommandSearch>
    <Account>
      Bekah - Unity Environmental Univeristy
      <Avatar>BS</Avatar>
      <WindowButtons>
        <IconButton aria-label="Notifications" $tone="#777"><Bell size={14} /></IconButton>
        <HelpButton aria-label="Help">?</HelpButton>
        <IconButton aria-label="Minimize"><svg width="10" height="9"><path d="M1 4.500h8" stroke="#777" /></svg></IconButton>
        <IconButton aria-label="Restore"><Restore /></IconButton>
        <IconButton aria-label="Close"><Cross c="#777" /></IconButton>
      </WindowButtons>
    </Account>
  </TitleBar>
);

const RibbonBar = () => (
  <Ribbon>
    <Group $w={83}>
      <GroupBody>
        <IconColumn>
          <IconButton aria-label="Global scene"><Globe /></IconButton>
          <IconButton aria-label="Local scene"><Scene /></IconButton>
          <ActiveTool aria-label="Map"><MapGlyph /></ActiveTool>
        </IconColumn>
        <BigButton><ConvertIcon /><span>Convert</span><Line><Chevron /></Line></BigButton>
      </GroupBody>
      <GroupLabel>View</GroupLabel>
    </Group>
    <Group $w={105}>
      <GroupBody>
        <BigButton><LinkViews /><span>Link</span><Line>Views <Chevron /></Line></BigButton>
        <BigButton><LinkCursors /><span>Link</span><span>Cursors</span></BigButton>
      </GroupBody>
    </Group>
    <Group $w={138}>
      <GroupBody $pad={2}>
        <BigButton><ResetPanes /><span>Reset</span><Line>Panes <Chevron /></Line></BigButton>
        <IconGrid>
          {(['catalog', 'toolbox', 'model', 'case', 'python', 'fly', 'table', 'task', 'grid'] as const).map((k, i) => (
            <React.Fragment key={k}>
              <IconButton aria-label={k}><PaneIcon kind={k} /></IconButton>
              {i % 3 === 2 && <IconButton aria-label={`${k} options`}><Chevron /></IconButton>}
            </React.Fragment>
          ))}
        </IconGrid>
      </GroupBody>
    </Group>
    <Group $w={51}>
      <GroupBody>
        <IconColumn $gap={8}>
          <IconButton aria-label="Add item"><AddList /></IconButton>
          <IconButton aria-label="Move down"><DownArrow /></IconButton>
        </IconColumn>
      </GroupBody>
    </Group>
    <Group $w={78}>
      <GroupBody>
        <BigButton><ColorVision /><span>Color Vision</span><Line>Simulator <Chevron /></Line></BigButton>
      </GroupBody>
    </Group>
    <Group $w={71}>
      <GroupBody $pad={9}>
        <IconColumn $gap={10}>
          <IconButton aria-label="New item"><AddList /></IconButton>
          <IconButton aria-label="Remove"><Cross c="#aaa" /></IconButton>
        </IconColumn>
        <Spring />
      </GroupBody>
    </Group>
    <Group $w={85} />
    <Group $w={86} />
  </Ribbon>
);

const ContentsPanel = () => (
  <Contents>
    <PanelTitle>Contents</PanelTitle>
    <FilterRow>
      <Filter size={13} color="#666" fill="#aaa" />
      <SearchField><BareInput placeholder="Search" aria-label="Search contents" /></SearchField>
    </FilterRow>
    <ViewTabs>
      <ViewTab $active aria-label="List by drawing order"><ListByOrder /></ViewTab>
      <ViewTab aria-label="List by data source"><Database /></ViewTab>
      <ViewTab aria-label="List by selection"><SelectionIcon /></ViewTab>
    </ViewTabs>
    <ContentsBody>
      <Layers>
        <OrderHeading>Drawing Order</OrderHeading>
        <LayerRow $indent={0} $h={18}><Triangle open /><MapGlyph /><LayerText>Map</LayerText></LayerRow>
        <LayerRow as="label" $indent={8} $h={20}><Triangle open /><CheckBox type="checkbox" defaultChecked /><LayerText>StopLocations</LayerText></LayerRow>
        <LayerRow $indent={20} $h={17}><svg width="7" height="7"><circle cx="3.500" cy="3.500" r="2.300" fill="#3a1f9e" stroke="#111" /></svg></LayerRow>
        <LayerRow as="label" $indent={8} $h={19}><Triangle open /><CheckBox type="checkbox" defaultChecked /><LayerText>Paths</LayerText></LayerRow>
        <FieldName>route_short_name</FieldName>
        <Symbols>{routes.map(([n, c]) => <SymbolRow key={n} $color={c}>{n}</SymbolRow>)}</Symbols>
      </Layers>
      <Gutter $w={14}><Chevron dir="up" c="#666" /><Chevron c="#666" /></Gutter>
    </ContentsBody>
  </Contents>
);

const CatalogPanel = () => (
  <CatalogWindow>
    <WinHead $h={24}>
      <WinTitle>Catalog</WinTitle>
      <IconButton aria-label="Catalog menu"><Chevron /></IconButton>
      <IconButton aria-label="Maximize Catalog"><Maximize /></IconButton>
      <IconButton aria-label="Close Catalog"><Cross /></IconButton>
    </WinHead>
    <CatalogTabs>
      <CatalogTab $active>Project</CatalogTab>
      <CatalogTab>Portal</CatalogTab>
      <CatalogTab>Computer</CatalogTab>
      <CatalogTab>Favorites</CatalogTab>
      <Spring />
      <IconButton aria-label="Menu"><Menu /></IconButton>
    </CatalogTabs>
    <CatalogSearch>
      <SearchField><BareInput aria-label="Search catalog" /><Magnify /><Chevron c="#666" /></SearchField>
    </CatalogSearch>
    <CatalogList>
      {files.map((f) => <CatalogItem key={f}><FileIcon />{f}</CatalogItem>)}
      <CatalogItem $root><Triangle /><LocatorIcon />Locators</CatalogItem>
    </CatalogList>
  </CatalogWindow>
);

const Geoprocessing = () => (
  <ToolWindow>
    <WinHead $h={24}>
      <WinTitle>Geoprocessing</WinTitle>
      <IconButton aria-label="Pane menu"><Chevron /></IconButton>
      <IconButton aria-label="Maximize pane"><Maximize /></IconButton>
      <IconButton aria-label="Close pane"><Cross /></IconButton>
    </WinHead>
    <ToolHead>
      <IconButton aria-label="Back"><RoundArrow dir={0} /></IconButton>
      <ToolName>GTFS To Public Transit Data Model</ToolName>
      <IconButton aria-label="Add"><PlusCircle /></IconButton>
    </ToolHead>
    <ToolTabs>
      <button>Parameters</button>
      <button>Environments</button>
      <HelpRing aria-label="Tool help">?</HelpRing>
    </ToolTabs>
    <ToolBody>
      <Form>
        <FieldLabel htmlFor="gtfs">Input GTFS Folders</FieldLabel>
        <PathRow><PathInput id="gtfs" /><IconButton type="button" aria-label="Browse folders"><FolderIcon open /></IconButton></PathRow>
        <FieldLabel htmlFor="target">Target Feature Dataset</FieldLabel>
        <PathRow><PathInput id="target" /><IconButton type="button" aria-label="Browse datasets"><FolderIcon open /></IconButton></PathRow>
        <Option><CheckBox type="checkbox" />Interpolate blank stop times</Option>
        <Option><CheckBox type="checkbox" />Append to existing tables</Option>
        <Option><CheckBox type="checkbox" />Make LVEShapes from shapes.txt</Option>
      </Form>
      <Gutter $w={14}>
        <Chevron dir="up" c="#666" />
        <ThumbTrack><Thumb $before={1} $size={98} /></ThumbTrack>
        <Chevron c="#666" />
      </Gutter>
    </ToolBody>
    <ToolFoot><RunButton><PlayIcon />Run<Chevron /></RunButton></ToolFoot>
  </ToolWindow>
);

const FolderDialog = () => (
  <Dialog role="dialog" aria-label="Input GTFS Folders">
    <DialogHead $h={26}>
      <WinTitle $tone="#1b7fc4">Input GTFS Folders</WinTitle>
      <IconButton aria-label="Maximize dialog"><Maximize bar={false} /></IconButton>
      <IconButton aria-label="Close dialog"><Cross s={9} w={1} /></IconButton>
    </DialogHead>
    <Toolbar>
      <IconButton aria-label="Back"><RoundArrow dir={0} /></IconButton>
      <IconButton aria-label="Forward"><RoundArrow dir={180} muted /></IconButton>
      <IconButton aria-label="Up"><RoundArrow dir={90} /></IconButton>
      <Crumbs>
        <CrumbIcon><MapGlyph /></CrumbIcon><Chevron /><span>Data</span><Chevron /><span>GTFS Schedule Sound Transit</span>
        <CrumbMenu aria-label="Recent locations"><svg width="6" height="4" viewBox="0 0 6 4"><path d="M0 0h6L3 4z" fill="#222" /></svg></CrumbMenu>
      </Crumbs>
      <Boxed $w={15} aria-label="Refresh"><RotateCw size={10} /></Boxed>
      <SearchGroup>
        <Boxed $w={20} aria-label="Sort"><SortIcon /></Boxed>
        <SearchField><BareInput placeholder="Search" aria-label="Search folder" /><Magnify /><Chevron c="#666" /></SearchField>
      </SearchGroup>
    </Toolbar>
    <Commands>
      <MenuButton>Organize <Chevron /></MenuButton>
      <MenuButton>New Item <Chevron /></MenuButton>
      <Spring />
      <Boxed $w={19} aria-label="Details"><DetailsIcon /></Boxed>
    </Commands>
    <Panes>
      <TreePane>
        <TreeScroll>
          <Tree>
            {folders.map((f, i) => (
              <TreeItem key={f}>
                <Expander aria-label={`Expand ${f}`}><Triangle /></Expander>
                <FolderButton $selected={i === 0}><FolderIcon />{f}</FolderButton>
              </TreeItem>
            ))}
          </Tree>
          <Favorites><FolderIcon />Favorites</Favorites>
        </TreeScroll>
        <Gutter $w={14}>
          <Chevron dir="up" c="#666" />
          <ThumbTrack><Thumb $before={117} $size={25} /></ThumbTrack>
          <Chevron c="#666" />
        </Gutter>
        <HScroll><Chevron dir="left" c="#666" /><HThumb /><Chevron dir="right" c="#666" /></HScroll>
      </TreePane>
      <Splitter />
      <ListPane>
        <ColumnHead>Name</ColumnHead>
        <Empty>This container is empty.</Empty>
      </ListPane>
    </Panes>
    <NameRow>
      <label htmlFor="name">Name</label>
      <NameField>
        <BareInput id="name" defaultValue="GTFS Schedule Sound Trans" />
        <IconButton aria-label="Clear name"><Cross s={6} w={1.8} /></IconButton>
      </NameField>
      <TypePicker>
        <TypeSelect aria-label="Item type"><option>Folders</option></TypeSelect>
        <Chevron />
      </TypePicker>
    </NameRow>
    <Actions>
      <ActionButton $primary>OK</ActionButton>
      <ActionButton>Cancel</ActionButton>
    </Actions>
  </Dialog>
);

export default function App() {
  return (
    <>
      <Global />
      <Shell>
        <TopBar />
        <Tabs>{tabs.map((t) => <Tab key={t} $active={t === 'View'}>{t}</Tab>)}</Tabs>
        <RibbonBar />
        <Workspace>
          <ContentsPanel />
          <MapView>
            <MapCanvas><CityMap /></MapCanvas>
            <StatusBar>
              <ScaleBox><BareInput defaultValue="1:71,662" aria-label="Map scale" /><Chevron /></ScaleBox>
              <Divider />
              <Pressed aria-label="Snapping"><Snap kind="add" /></Pressed>
              <IconButton aria-label="Grid"><Snap kind="grid" /></IconButton>
              <IconButton aria-label="Edit vertices"><Snap kind="edit" /></IconButton>
              <IconButton aria-label="Crosshair"><Snap kind="cross" /></IconButton>
              <IconButton aria-label="Rotation"><Snap kind="north" /></IconButton>
              <Chevron />
              <Divider />
              <Coordinates>1,270,376.97E 249,613.13N ftUS <Chevron /></Coordinates>
            </StatusBar>
          </MapView>
        </Workspace>
        <CatalogPanel />
        <Geoprocessing />
        <FolderDialog />
      </Shell>
    </>
  );
}
